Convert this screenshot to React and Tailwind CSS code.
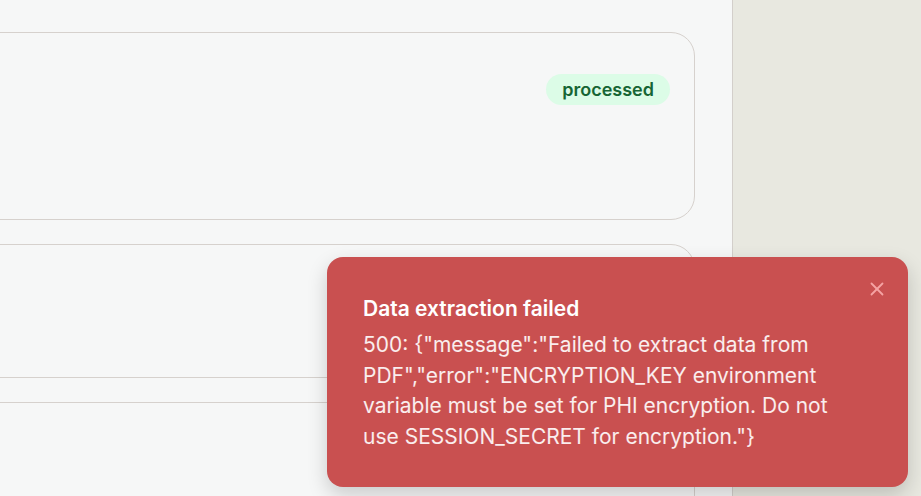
import React from "react";

export default function App() {
  return (
    <div
      className="relative flex h-[496px] w-[921px] overflow-hidden bg-[#e8e8e0]"
      style={{ fontFamily: "Inter, 'Noto Sans', sans-serif" }}
    >
      <main className="flex h-full w-[733px] shrink-0 flex-col gap-6 border-r border-[#d3cfcb] bg-[#f6f7f7] pr-[37px] pt-8">
        <div className="-ml-8 flex h-[188px] shrink-0 justify-end rounded-3xl border border-[#d6d1cd] bg-[#f6f7f7] px-6 pt-[41px]">
          <span className="h-[31px] rounded-full bg-[#dcfce7] px-4 text-[18px] font-semibold leading-[31px] text-[#166534]">
            processed
          </span>
        </div>
        <div className="-ml-8 h-[134px] shrink-0 rounded-3xl border border-[#d6d1cd] bg-[#f6f7f7]" />
        <div className="-ml-8 h-[200px] shrink-0 rounded-3xl border border-[#d6d1cd] bg-[#f6f7f7]" />
      </main>

      <div className="absolute left-[327px] top-[257px] w-[581px] rounded-2xl bg-[#c95050] pb-[34px] pl-9 pr-14 pt-[38px] shadow-[0_8px_20px_rgba(0,0,0,0.18)]">
        <button className="absolute right-[19px] top-[20px] flex h-6 w-6 items-center justify-center text-[#f5a3a3]">
          <svg width="22" height="22" viewBox="0 0 24 24" fill="none" stroke="currentColor" strokeWidth="2" strokeLinecap="round" strokeLinejoin="round">
            <path d="M18 6 6 18" />
            <path d="m6 6 12 12" />
          </svg>
        </button>
        <div className="text-[21px] font-semibold leading-7 text-white">Data extraction failed</div>
        <div className="mt-[7px] text-[21px] leading-[30.7px] text-white/90">
          500: {"{"}"message":"Failed to extract data from PDF","error":"ENCRYPTION_KEY environment variable must be set for PHI encryption. Do not use SESSION_SECRET for encryption."{"}"}
        </div>
      </div>
    </div>
  );
}
